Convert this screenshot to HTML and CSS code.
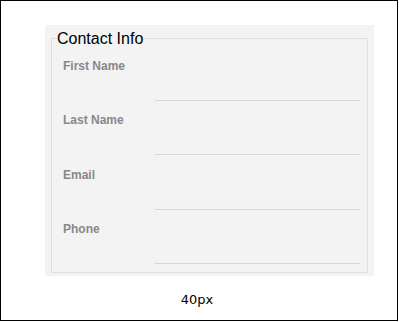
FILE: index.html
```html
<!DOCTYPE html>
<html>
<head>
<meta charset="utf-8">
<link rel="stylesheet" href="styles.css">
</head>
<body>
<div class="frame">
  <div class="panel">
    <fieldset class="contact">
      <legend class="contact-legend">Contact Info</legend>
      <div class="row">
        <label class="field-label" for="first">First Name</label>
        <input class="field-input" id="first" type="text">
      </div>
      <div class="row">
        <label class="field-label" for="last">Last Name</label>
        <input class="field-input" id="last" type="text">
      </div>
      <div class="row">
        <label class="field-label" for="email">Email</label>
        <input class="field-input" id="email" type="text">
      </div>
      <div class="row">
        <label class="field-label" for="phone">Phone</label>
        <input class="field-input" id="phone" type="text">
      </div>
    </fieldset>
  </div>
  <div class="caption">40px</div>
</div>
</body>
</html>
```
FILE: styles.css
```css
html, body {
  margin: 0;
  padding: 0;
  background: #fff;
}

.frame {
  box-sizing: border-box;
  width: 398px;
  height: 321px;
  border: 1px solid #000;
  padding-top: 24px;
}

.panel {
  box-sizing: border-box;
  width: 329px;
  margin-left: 44px;
  padding: 5px 6px 3px 6px;
  background: #f3f3f3;
}

.contact {
  margin: 0;
  padding: 11px 0 8px 11px;
  border: 1px solid #dedede;
  min-width: 0;
  display: flex;
  flex-direction: column;
  gap: 11.33px;
}

.contact-legend {
  margin-left: -6px;
  padding: 0;
  font-family: "Liberation Sans", Arial, sans-serif;
  font-size: 16px;
  line-height: 17px;
  color: #000;
}

.row {
  display: flex;
  align-items: flex-start;
}

.field-label {
  width: 92px;
  flex: none;
  padding-top: 1px;
  font-family: "Liberation Sans", Arial, sans-serif;
  font-size: 12px;
  font-weight: bold;
  line-height: 14px;
  color: #888;
}

.field-input {
  box-sizing: border-box;
  width: 205px;
  height: 43px;
  margin: 0;
  padding: 0;
  border: none;
  border-bottom: 1px solid #d6d6d6;
  background: transparent;
  outline: none;
}

.caption {
  margin-top: 16px;
  padding-right: 4px;
  text-align: center;
  font-family: "DejaVu Sans", Verdana, sans-serif;
  font-size: 13px;
  line-height: 15px;
  color: #000;
}
```
